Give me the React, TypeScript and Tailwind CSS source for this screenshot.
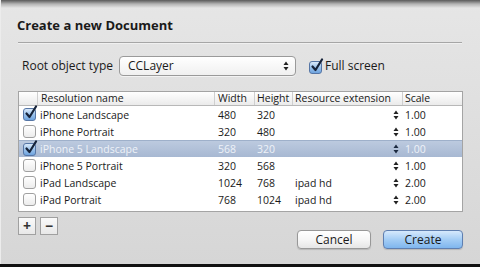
import React from "react";

const rows = [
  { name: "iPhone Landscape", w: "480", h: "320", ext: "", scale: "1.00", checked: true, selected: false },
  { name: "iPhone Portrait", w: "320", h: "480", ext: "", scale: "1.00", checked: false, selected: false },
  { name: "iPhone 5 Landscape", w: "568", h: "320", ext: "", scale: "1.00", checked: true, selected: true },
  { name: "iPhone 5 Portrait", w: "320", h: "568", ext: "", scale: "1.00", checked: false, selected: false },
  { name: "iPad Landscape", w: "1024", h: "768", ext: "ipad hd", scale: "2.00", checked: false, selected: false },
  { name: "iPad Portrait", w: "768", h: "1024", ext: "ipad hd", scale: "2.00", checked: false, selected: false },
];

function CheckBox({ checked }: { checked: boolean }) {
  if (!checked) {
    return (
      <div className="w-[13px] h-[13px] rounded-[3px] border border-[#a0a0a0] bg-gradient-to-b from-[#ffffff] to-[#ececec]" />
    );
  }
  return (
    <div className="relative w-[13px] h-[13px]">
      <div className="w-[13px] h-[13px] rounded-[3px] border border-[#5676a6] bg-gradient-to-b from-[#d9e9fa] via-[#9cc3ec] to-[#6ea3de]" />
      <svg className="absolute left-[1px] top-[-3px]" width="14" height="15" viewBox="0 0 14 15">
        <path d="M2.5 8.5 L5.5 12 L12 1.5" fill="none" stroke="#16233a" strokeWidth="2.2" strokeLinecap="round" strokeLinejoin="round" />
      </svg>
    </div>
  );
}

function Stepper({ light }: { light?: boolean }) {
  const c = light ? "#1c2a40" : "#222";
  return (
    <svg width="6" height="10" viewBox="0 0 6 10">
      <path d="M3 0.5 L5.5 4 L0.5 4 Z" fill={c} />
      <path d="M3 9.5 L5.5 6 L0.5 6 Z" fill={c} />
    </svg>
  );
}

export default function App() {
  return (
    <div className="w-[480px] h-[267px] overflow-hidden bg-[#111]">
      <div className="w-[480px] h-[264px] flex flex-col bg-gradient-to-b from-[#e6e6e6] to-[#d6d6d6] font-['Open_Sans','DejaVu_Sans',sans-serif] text-[#1a1a1a] border-l border-l-[#ececec]">
        <div className="h-[8px] shrink-0 bg-gradient-to-b from-[#5a5a5a] via-[#b4b4b4] to-[#e5e5e5]" />
        <div className="mt-[9px] pl-[16px] h-[16px] leading-[16px] text-[13px] font-bold">Create a new Document</div>
        <div className="mt-[9px] ml-[17px] w-[444px] h-[1px] bg-[#a6a6a6]" />
        <div className="ml-[17px] w-[444px] h-[1px] bg-[#f0f0f0]" />
        <div className="mt-[12px] flex items-center h-[20px]">
          <div className="pl-[21px] w-[118px] text-[12px] leading-[16px] whitespace-nowrap">Root object type</div>
          <div className="w-[177px] h-[20px] rounded-[4px] border border-[#9a9a9a] bg-gradient-to-b from-[#ffffff] to-[#f0f0f0] flex items-center justify-between pl-[8px] pr-[6px] shadow-[0_1px_0_rgba(255,255,255,0.6)]">
            <span className="text-[12px] leading-[16px]">CCLayer</span>
            <Stepper />
          </div>
          <div className="ml-[13px] mt-[2px]">
            <CheckBox checked />
          </div>
          <div className="ml-[3px] text-[12px] leading-[16px] whitespace-nowrap">Full screen</div>
        </div>
        <div className="mt-[15px] ml-[17px] w-[445px] h-[121px] border border-[#a4a4a4] bg-white">
          <div className="grid grid-cols-[18px_177px_40px_38px_110px_60px] h-[14px] border-b border-[#b8b8b8] bg-gradient-to-b from-[#ffffff] to-[#ebebeb] text-[10.5px] leading-[13px] whitespace-nowrap">
            <div />
            <div className="border-l border-[#cfcfcf] pl-[3px]">Resolution name</div>
            <div className="border-l border-[#cfcfcf] pl-[3px]">Width</div>
            <div className="border-l border-[#cfcfcf] pl-[2px]">Height</div>
            <div className="border-l border-[#cfcfcf] pl-[2px]">Resource extension</div>
            <div className="border-l border-[#cfcfcf] pl-[2px]">Scale</div>
          </div>
          {rows.map((r) => (
            <div
              key={r.name}
              className={
                "grid grid-cols-[18px_177px_40px_38px_110px_60px] h-[17px] items-center text-[10.5px] leading-[14px] whitespace-nowrap " +
                (r.selected
                  ? "bg-gradient-to-b from-[#bccadf] to-[#a7b8d2] text-[#eef2f8] border-t border-[#9eb0ca]"
                  : "")
              }
            >
              <div className="pl-[4px] flex items-center">
                <CheckBox checked={r.checked} />
              </div>
              <div className="pl-[3px]">{r.name}</div>
              <div className="pl-[4px]">{r.w}</div>
              <div className="pl-[3px]">{r.h}</div>
              <div className="pl-[3px] flex items-center justify-between pr-[3px]">
                <span>{r.ext}</span>
                <Stepper light={r.selected} />
              </div>
              <div className="pl-[3px]">{r.scale}</div>
            </div>
          ))}
        </div>
        <div className="ml-[17px] w-[445px] flex justify-between">
          <div className="mt-[5px] flex gap-[4px]">
            <div className="w-[18px] h-[18px] border border-[#a0a0a0] bg-gradient-to-b from-[#fafafa] to-[#e8e8e8] flex items-center justify-center text-[14px] font-bold leading-none text-[#333]">+</div>
            <div className="w-[18px] h-[18px] border border-[#a0a0a0] bg-gradient-to-b from-[#fafafa] to-[#e8e8e8] flex items-center justify-center text-[14px] font-bold leading-none text-[#333]">−</div>
          </div>
          <div className="mt-[18px] flex gap-[12px]">
            <div className="w-[74px] h-[19px] rounded-[4px] border border-[#989898] bg-gradient-to-b from-[#ffffff] via-[#f6f6f6] to-[#e6e6e6] flex items-center justify-center text-[12px] leading-[16px] shadow-[0_1px_1px_rgba(0,0,0,0.15)]">Cancel</div>
            <div className="w-[80px] h-[19px] rounded-[4px] border border-[#5f7fb0] bg-gradient-to-b from-[#d6e9fc] via-[#a4cdf5] to-[#7fb6ee] flex items-center justify-center text-[12px] leading-[16px] shadow-[0_1px_1px_rgba(0,0,0,0.15)]">Create</div>
          </div>
        </div>
      </div>
    </div>
  );
}
